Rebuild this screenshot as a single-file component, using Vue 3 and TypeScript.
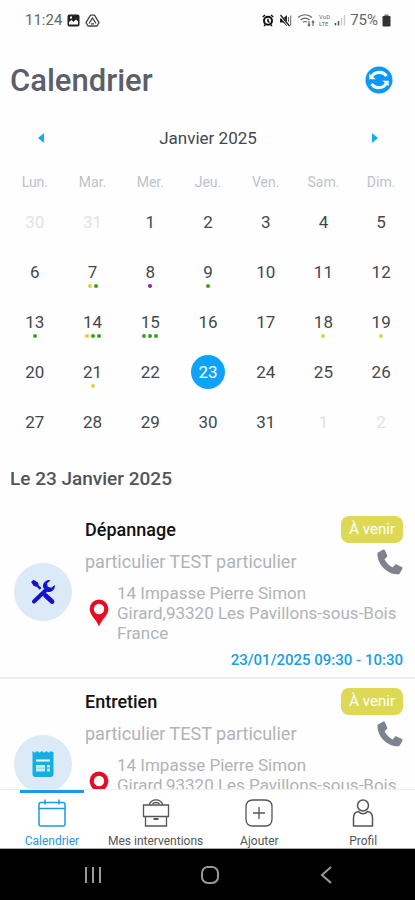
<script setup lang="ts">
import { ref } from 'vue'

type Dot = 'yellow' | 'green' | 'purple'
interface Day {
  n: number
  outside?: boolean
  dots?: Dot[]
}
interface Visit {
  id: number
  kind: 'repair' | 'service'
  title: string
  client: string
  address: string[]
  status: string
  slot: string
}

const weekdays = ['Lun.', 'Mar.', 'Mer.', 'Jeu.', 'Ven.', 'Sam.', 'Dim.']

const marks: Record<number, Dot[]> = {
  7: ['yellow', 'green'],
  8: ['purple'],
  9: ['green'],
  13: ['green'],
  14: ['yellow', 'green', 'green'],
  15: ['green', 'green', 'green'],
  18: ['yellow'],
  19: ['yellow'],
  21: ['yellow'],
}

const days: Day[] = [
  { n: 30, outside: true },
  { n: 31, outside: true },
  ...Array.from({ length: 31 }, (_, i): Day => ({ n: i + 1, dots: marks[i + 1] })),
  { n: 1, outside: true },
  { n: 2, outside: true },
]

const selected = ref(23)

function pick(day: Day): void {
  if (!day.outside) selected.value = day.n
}

const visits: Visit[] = [
  {
    id: 1,
    kind: 'repair',
    title: 'Dépannage',
    client: 'particulier TEST particulier',
    address: ['14 Impasse Pierre Simon', 'Girard,93320 Les Pavillons-sous-Bois', 'France'],
    status: 'À venir',
    slot: '23/01/2025 09:30 - 10:30',
  },
  {
    id: 2,
    kind: 'service',
    title: 'Entretien',
    client: 'particulier TEST particulier',
    address: ['14 Impasse Pierre Simon', 'Girard,93320 Les Pavillons-sous-Bois'],
    status: 'À venir',
    slot: '',
  },
]
</script>

<template>
  <div class="screen">
    <div class="status">
      <div class="status-side">
        <span class="clock">11:24</span>
        <svg width="13" height="13" viewBox="0 0 13 13">
          <rect x="0.5" y="0.5" width="12" height="12" rx="2" fill="#222" />
          <path d="M2 10.5V8l2.5-2 2 2L9 5.500l2 2v3z" fill="#fff" />
          <rect x="3" y="2.500" width="2" height="2" fill="#fff" />
        </svg>
        <svg width="15" height="13" viewBox="0 0 15 13" fill="none" stroke="#444" stroke-width="1.300">
          <path d="M5.500 1.200h4l4.500 7.500-2 3.300H3L1 8.700z" stroke-linejoin="round" />
          <path d="M4 9.500l3.500-5.500L11 9.500M6 9.800h3" />
        </svg>
      </div>
      <div class="status-side right">
        <svg width="12" height="13" viewBox="0 0 12 13">
          <circle cx="6" cy="6.800" r="4" fill="none" stroke="#111" stroke-width="2" />
          <path d="M0.800 3L3 1M11.200 3L9 1M2 12l1.500-1.500M10 12l-1.500-1.500M6 4.800v2.500l1.500 1" stroke="#111" stroke-width="1.500" fill="none" />
        </svg>
        <svg class="mute" width="13" height="13" viewBox="0 0 13 13">
          <path d="M1 4.500h3L8 1v11L4 8.500H1z" fill="#222" />
          <path d="M1 1l9 11" stroke="#fff" stroke-width="2.200" />
          <path d="M1.500 1l9 11" stroke="#222" stroke-width="1.300" />
          <path d="M9.500 3v5M11.700 1.500v10" stroke="#666" stroke-width="1" />
        </svg>
        <svg width="18" height="14" viewBox="0 0 18 14" fill="none" stroke="#666" stroke-width="1.200">
          <path d="M1 4.500C5 0.800 11 0.800 15 4.500M3.500 7c2.800-2.300 6.300-2.300 9 0M6 9.300c1.300-1 2.800-1 4 0" />
          <path d="M12 8v5M10.800 11.500L12 13l1.200-1.500M16 13V8M14.800 9.500L16 8l1.200 1.500" />
        </svg>
        <span class="lte"><span>VoD</span><span>LTE</span></span>
        <svg width="12" height="12" viewBox="0 0 12 12">
          <path d="M1.500 9v2.500M4.500 7v4.500" stroke="#555" stroke-width="1.500" />
          <path d="M7.500 4v7.500M10.500 1v10.500" stroke="#ccc" stroke-width="1.500" />
        </svg>
        <span class="battery">75%</span>
        <svg width="9" height="13" viewBox="0 0 9 13">
          <rect x="2.500" y="0.500" width="4" height="2" fill="#777" />
          <rect x="0.500" y="2" width="8" height="10.500" rx="1.200" fill="#333" />
        </svg>
      </div>
    </div>

    <header class="head">
      <h1>Calendrier</h1>
      <button class="plain" type="button" aria-label="Actualiser">
        <svg width="28" height="28" viewBox="0 0 28 28">
          <circle cx="14" cy="14" r="13.500" fill="#0c98fb" />
          <g fill="none" stroke="#fff" stroke-width="3">
            <path d="M6.300 11.500C8.500 5.500 17.500 4.500 21.500 10" />
            <path d="M21.700 16.500C19.500 22.500 10.500 23.500 6.500 18" />
          </g>
          <path d="M4.300 7.800v5.400h6.400zM23.700 20.200v-5.400h-6.400z" fill="#fff" />
        </svg>
      </button>
    </header>

    <section class="calendar">
      <div class="month">
        <button class="plain arrow" type="button" aria-label="Mois précédent">
          <svg width="6" height="10" viewBox="0 0 6 10"><path d="M6 0v10L0 5z" fill="#12afe2" /></svg>
        </button>
        <span>Janvier 2025</span>
        <button class="plain arrow" type="button" aria-label="Mois suivant">
          <svg width="6" height="10" viewBox="0 0 6 10"><path d="M0 0v10l6-5z" fill="#12afe2" /></svg>
        </button>
      </div>
      <div class="week names">
        <span v-for="w in weekdays" :key="w">{{ w }}</span>
      </div>
      <div class="week">
        <button
          v-for="(day, i) in days"
          :key="i"
          type="button"
          class="plain day"
          :class="{ outside: day.outside, selected: !day.outside && day.n === selected }"
          @click="pick(day)"
        >
          <span class="num">{{ day.n }}</span>
          <span class="dots">
            <i v-for="(d, k) in day.dots" :key="k" :class="d"></i>
          </span>
        </button>
      </div>
    </section>

    <h2>Le {{ selected }} Janvier 2025</h2>

    <main class="feed">
      <article v-for="v in visits" :key="v.id" class="visit">
        <div class="avatar">
          <svg v-if="v.kind === 'repair'" width="28" height="28" viewBox="0 0 28 28">
            <path d="M5 23.500L18 11" stroke="#1414cf" stroke-width="4" stroke-linecap="round" fill="none" />
            <path d="M21.500 2.300a6 6 0 0 0-7.300 7.500l4 4A6 6 0 0 0 25.800 7l-3.500 2.800-3.500-1-.8-3.300z" fill="#1414cf" />
            <path d="M2 4l2.500-2.300L9 4.500l.8 3L12.500 10l-1.800 1.800L8 9 4.800 8z" fill="#1414cf" />
            <path d="M16.500 17.500l6.500 6" stroke="#1414cf" stroke-width="4.800" stroke-linecap="round" />
          </svg>
          <svg v-else width="24" height="28" viewBox="0 0 24 28">
            <path d="M1.500 1l2.300 1.800L6.200 1l2.300 1.800L10.800 1l2.300 1.800L15.500 1l2.300 1.800L20 1l2.500 1.500V24a3 3 0 0 1-3 3h-15a3 3 0 0 1-3-3z" fill="#12afe2" />
            <path d="M5 10.500h14" stroke="#fff" stroke-width="2" />
            <path d="M5 15h9v6.500H5zM16 15h3v2.500h-3zM16 18.500h3v3h-3z" fill="#c5eafa" />
            <path d="M5 18.200h9" stroke="#7fd3f0" stroke-width="0.800" />
          </svg>
        </div>
        <div class="body">
          <div class="line">
            <h3>{{ v.title }}</h3>
            <span class="badge">{{ v.status }}</span>
          </div>
          <div class="line client">
            <span>{{ v.client }}</span>
            <button class="plain" type="button" aria-label="Appeler">
              <svg width="26" height="28" viewBox="0 0 26 28">
                <path d="M1 5.500L6.300 2.600c.6-.3 1.200-.1 1.500.5l2.400 5.400c.3.600.1 1.100-.3 1.500L7.500 12.200c1.800 3.600 4.600 6.400 8.200 8.200l2.300-2.600c.4-.4 1-.6 1.500-.3l5.400 2.400c.6.300.8.900.6 1.500l-2.800 5c-.3.600-.8.900-1.400.9C10 27.300.6 18 .4 6.700c0-.5.200-.9.600-1.200z" fill="#7d838e" />
              </svg>
            </button>
          </div>
          <div class="place" :class="{ short: v.address.length < 3 }">
            <svg width="20" height="28" viewBox="0 0 20 28">
              <path d="M10 .5A9.400 9.400 0 0 0 .6 9.900C.6 16 7.500 20.500 10 27.500c2.500-7 9.400-11.500 9.400-17.600A9.400 9.400 0 0 0 10 .5z" fill="#ea0a22" />
              <circle cx="10" cy="10" r="5.200" fill="#fff" />
            </svg>
            <address>
              <span v-for="a in v.address" :key="a">{{ a }}</span>
            </address>
          </div>
          <time>{{ v.slot }}</time>
        </div>
      </article>
    </main>

    <nav class="tabs">
      <a href="#calendrier" class="active">
        <svg width="28" height="28" viewBox="0 0 28 28" fill="none" stroke="currentColor" stroke-width="1.500">
          <rect x="1" y="3.500" width="26" height="23.500" rx="2" />
          <path d="M1 9.500h26M7 .5v5M21 .5v5" />
        </svg>
        <span>Calendrier</span>
      </a>
      <a href="#interventions">
        <svg width="28" height="28" viewBox="0 0 28 28" fill="none" stroke="currentColor" stroke-width="1.300">
          <path d="M1.500 6h25v11.500h-25zM3.500 17.500v9.500h21v-9.500" />
          <path d="M7 6C9.500-.8 18.500-.8 21 6M10.500 5c1.500-2 5.500-2 7 0" />
          <path d="M11.500 20h5" stroke-width="2" />
        </svg>
        <span>Mes interventions</span>
      </a>
      <a href="#ajouter">
        <svg width="28" height="28" viewBox="0 0 28 28" fill="none" stroke="currentColor" stroke-width="1.300">
          <path d="M8 1h12q7 0 7 7v12q0 7-7 7H8q-7 0-7-7V8q0-7 7-7zM14 8v12M8 14h12" />
        </svg>
        <span>Ajouter</span>
      </a>
      <a href="#profil">
        <svg width="28" height="28" viewBox="0 0 28 28" fill="none" stroke="currentColor" stroke-width="1.500">
          <circle cx="14" cy="6.500" r="5.500" />
          <path d="M9.500 12.500C6 13 4.500 15.500 4.500 19v8h19v-8c0-3.500-1.500-6-5-6.500-2.500 3-6.500 3-9 0z" stroke-linejoin="round" />
        </svg>
        <span>Profil</span>
      </a>
    </nav>

    <div class="system">
      <button class="plain" type="button" aria-label="Applications récentes">
        <svg width="20" height="20" viewBox="0 0 20 20" stroke="#9a9a9a" stroke-width="2"><path d="M3 2v16M10 2v16M17 2v16" /></svg>
      </button>
      <button class="plain" type="button" aria-label="Accueil">
        <svg width="20" height="20" viewBox="0 0 20 20" fill="none" stroke="#9a9a9a" stroke-width="2"><rect x="2" y="2" width="16" height="16" rx="6" /></svg>
      </button>
      <button class="plain" type="button" aria-label="Retour">
        <svg width="20" height="20" viewBox="0 0 20 20" fill="none" stroke="#9a9a9a" stroke-width="2"><path d="M14 2L5 10l9 8" /></svg>
      </button>
    </div>
  </div>
</template>

<style>
body {
  background: #fff;
}
</style>

<style scoped>
.screen {
  display: flex;
  flex-direction: column;
  height: 100vh;
  overflow: hidden;
  background: #fefefe;
  font-family: Roboto, sans-serif;
  color: #43484d;
}
h1,
h2,
h3 {
  margin: 0;
}
svg {
  display: block;
  flex: none;
}
.plain {
  padding: 0;
  border: 0;
  background: none;
  font: inherit;
  color: inherit;
  cursor: pointer;
}

.status {
  display: flex;
  justify-content: space-between;
  align-items: center;
  height: 40px;
  padding: 0 24px 0 25px;
  color: #666;
}
.status-side {
  display: flex;
  align-items: center;
  gap: 5px;
}
.right {
  gap: 4px;
}
.clock,
.battery {
  font-size: 15px;
}
.mute {
  margin: 0 1px;
}
.lte {
  display: flex;
  flex-direction: column;
  font-size: 6px;
  line-height: 7px;
}

.head {
  display: flex;
  justify-content: space-between;
  align-items: center;
  height: 80px;
  padding: 0 22px 0 10px;
}
h1 {
  font-size: 31px;
  font-weight: 500;
  color: #5c5f69;
}

.calendar {
  display: flex;
  flex-direction: column;
  padding: 0 5px 0 6px;
}
.month {
  display: flex;
  justify-content: space-between;
  align-items: center;
  height: 36px;
  padding: 0 24px;
  font-size: 17px;
}
.arrow {
  padding: 8px;
}
.week {
  display: grid;
  grid-template-columns: repeat(7, 1fr);
}
.names {
  height: 40px;
  align-items: end;
  margin-bottom: 1px;
  text-align: center;
  font-size: 14px;
  line-height: 28px;
  color: #bcc2c9;
}
.day {
  display: flex;
  flex-direction: column;
  align-items: center;
  height: 50px;
  padding-top: 8px;
  font-size: 17px;
}
.num {
  width: 34px;
  height: 34px;
  border-radius: 50%;
  line-height: 34px;
  text-align: center;
}
.outside {
  color: #dfe3e7;
}
.selected .num {
  background: #0fa2fb;
  color: #fff;
}
.dots {
  display: flex;
  gap: 2px;
  margin-top: -5px;
}
.dots i {
  width: 4px;
  height: 4px;
  border-radius: 50%;
}
.yellow {
  background: #d8d63c;
}
.green {
  background: #35a61c;
}
.purple {
  background: #8e20a8;
}

h2 {
  padding: 16px 10px 12px;
  font-size: 19px;
  line-height: 32px;
  font-weight: 500;
  color: #50545b;
}

.feed {
  flex: 1;
  min-height: 0;
  overflow: hidden;
}
.visit {
  display: flex;
  align-items: center;
  height: 172px;
  box-sizing: border-box;
  padding: 0 12px 0 14px;
  gap: 13px;
  border-bottom: 2px solid #eee;
}
.avatar {
  display: flex;
  flex: none;
  justify-content: center;
  align-items: center;
  width: 58px;
  height: 58px;
  border-radius: 50%;
  background: #dce9f6;
}
.body {
  flex: 1;
  min-width: 0;
  height: 100%;
  padding-top: 9px;
  box-sizing: border-box;
}
.line {
  display: flex;
  justify-content: space-between;
  align-items: center;
}
h3 {
  font-size: 18px;
  font-weight: 500;
  color: #111;
}
.badge {
  padding: 0 8px;
  border-radius: 8px;
  background: #ddd955;
  color: #fff;
  font-size: 15px;
  line-height: 27px;
}
.client {
  height: 36px;
  font-size: 18px;
  color: #b0b3b7;
}
.place {
  display: flex;
  align-items: center;
  gap: 8px;
  height: 60px;
  padding: 4px 0 0 4px;
}
.short address {
  align-self: flex-start;
}
address {
  display: flex;
  flex-direction: column;
  font-style: normal;
  font-size: 17px;
  line-height: 20px;
  color: #b0b3b7;
  white-space: nowrap;
}
time {
  display: block;
  margin-top: 7px;
  text-align: right;
  font-size: 15px;
  line-height: 20px;
  font-weight: 500;
  color: #189fe8;
}

.tabs {
  display: grid;
  grid-template-columns: repeat(4, 1fr);
  height: 60px;
  box-sizing: border-box;
  border-top: 1px solid #eee;
  border-bottom: 1px solid #aaa;
  background: #fff;
}
.tabs a {
  display: flex;
  flex-direction: column;
  align-items: center;
  gap: 6px;
  color: #555;
  font-size: 12px;
  line-height: 16px;
  text-decoration: none;
  white-space: nowrap;
}
.tabs a::before {
  content: '';
  width: 64px;
  height: 3px;
}
.tabs .active {
  color: #1b9ae6;
}
.tabs .active::before {
  background: #1b9ae6;
}

.system {
  display: flex;
  justify-content: space-around;
  align-items: center;
  height: 51px;
  padding: 0 30px 0 34px;
  background: #000;
}
</style>
